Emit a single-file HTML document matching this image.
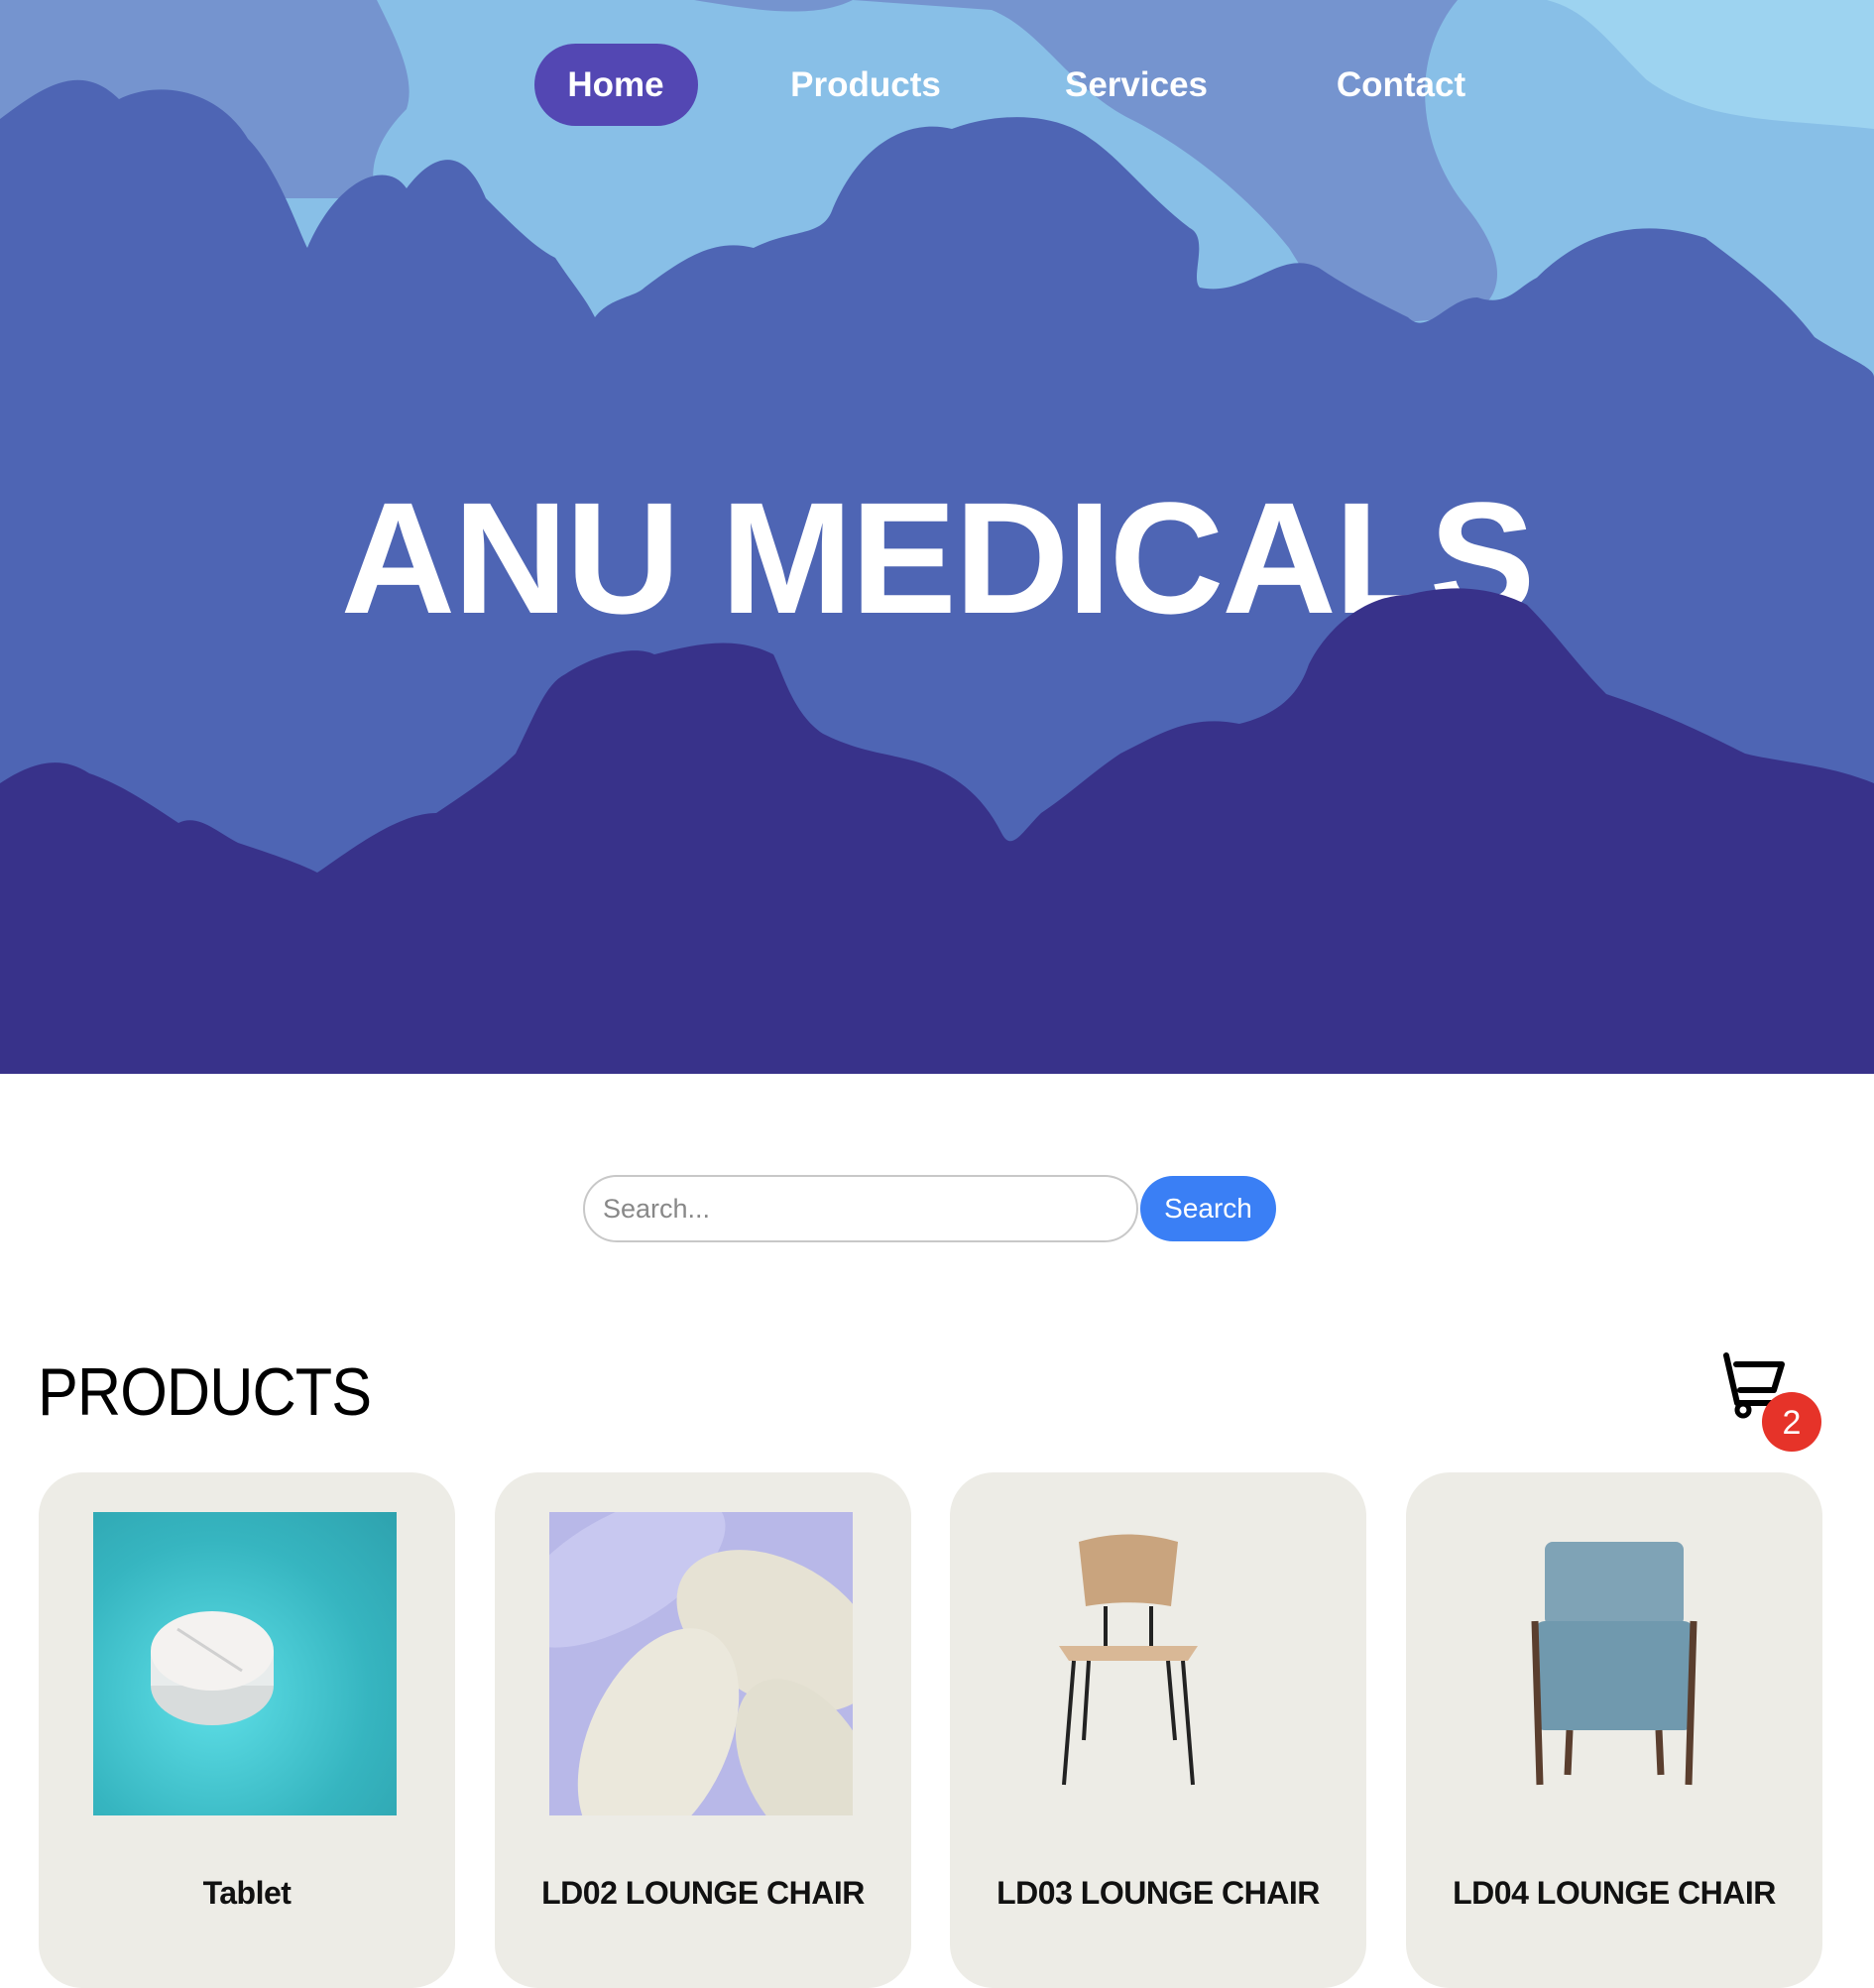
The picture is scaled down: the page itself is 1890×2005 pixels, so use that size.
<!DOCTYPE html>
<html><head><meta charset="utf-8"><style>
*{margin:0;padding:0;box-sizing:border-box}
body{width:1890px;height:1974px;overflow:hidden;background:#fff;font-family:"Liberation Sans",sans-serif;position:relative}
.hero{position:absolute;left:0;top:0;width:1890px;height:1083px;overflow:hidden;background:#88bfe7}
.nav a{position:absolute;top:44px;height:83px;line-height:83px;color:#fff;font-weight:700;font-size:35px;text-decoration:none;transform:translateX(-50%);white-space:nowrap}
.title{position:absolute;left:0;width:1890px;text-align:center;top:468px;font-size:160px;font-weight:700;color:#fff;letter-spacing:-2px;line-height:190px}
.abs{position:absolute}
.card{position:absolute;top:1485px;width:420px;height:520px;background:#edece6;border-radius:44px}
.card .img{position:absolute;left:55px;top:40px;width:306px;height:306px;overflow:hidden}
.cap{position:absolute;top:1891px;text-align:center;font-weight:700;font-size:32px;color:#111;letter-spacing:-0.5px}
</style></head><body>
<div class="hero">
<svg class="abs" style="left:0;top:0" width="1890" height="1083" viewBox="0 0 1890 1083">
<path d="M860 0 L1890 0 L1890 130 C1800 120 1720 125 1660 80 C1620 40 1600 10 1560 0 Z" fill="#9dd3f0"/>
<path d="M0 0 L1890 0 L1890 0 L1470 0 C1420 60 1430 150 1480 210 C1520 260 1520 300 1480 320 L1350 330 L1300 250 C1260 200 1200 150 1140 120 C1080 90 1050 30 1000 10 L860 0 C820 20 760 10 700 0 L380 0 C400 40 420 80 410 110 C380 140 370 170 380 200 L0 200 Z" fill="#7594cf"/>
<path d="M0 120 C40 90 80 60 120 100 C160 80 220 90 250 140 C280 170 300 230 310 250 C340 180 390 160 410 190 C440 150 470 150 490 200 C520 230 540 250 560 260 C580 290 590 300 600 320 C615 300 640 300 650 290 C690 260 720 240 760 250 C800 230 830 240 840 210 C870 140 920 120 960 130 C1000 115 1060 110 1100 140 C1130 160 1160 200 1200 230 C1220 240 1200 280 1210 290 C1260 300 1290 250 1330 270 C1360 290 1380 300 1420 320 C1440 340 1460 300 1490 300 C1520 310 1530 290 1550 280 C1600 230 1660 220 1720 240 C1760 270 1800 300 1830 340 C1860 360 1890 370 1890 380 L1890 1083 L0 1083 Z" fill="#4e65b4"/>
</svg>
<div class="title">ANU MEDICALS</div>
<svg class="abs" style="left:0;top:0" width="1890" height="1083" viewBox="0 0 1890 1083">
<path d="M0 790 C30 770 60 760 90 780 C120 790 150 810 180 830 C200 820 220 840 240 850 C270 860 300 870 320 880 C350 860 400 820 440 820 C470 800 500 780 520 760 C540 720 550 690 570 680 C600 660 640 650 660 660 C700 650 740 640 780 660 C790 680 800 720 830 740 C870 760 900 760 930 770 C960 780 990 800 1010 840 C1020 860 1030 840 1050 820 C1080 800 1100 780 1130 760 C1170 740 1200 720 1250 730 C1290 720 1310 700 1320 670 C1340 630 1380 600 1420 600 C1460 590 1500 590 1540 610 C1570 640 1590 670 1620 700 C1680 720 1720 740 1760 760 C1800 770 1840 770 1890 790 L1890 1083 L0 1083 Z" fill="#38328a"/>
</svg>
<div class="abs" style="left:539px;top:44px;width:165px;height:83px;border-radius:42px;background:#5347b3"></div>
<div class="nav">
<a style="left:621px">Home</a>
<a style="left:873px">Products</a>
<a style="left:1146px">Services</a>
<a style="left:1413px">Contact</a>
</div>
</div>

<div class="abs" style="left:588px;top:1185px;width:560px;height:68px;border:2px solid #c8c8c8;border-radius:34px;font-size:27px;color:#888;line-height:64px;padding-left:18px">Search...</div>
<div class="abs" style="left:1150px;top:1186px;width:137px;height:66px;background:#3a7ff5;border-radius:33px;color:#fff;font-size:28px;line-height:66px;text-align:center">Search</div>

<div class="abs" style="left:38px;top:1366px;font-size:68px;color:#000;line-height:76px;letter-spacing:-1px;transform:scaleX(0.9);transform-origin:left">PRODUCTS</div>
<svg class="abs" style="left:1730px;top:1360px" width="120" height="110" viewBox="0 0 120 110">
<path d="M11 7 L22 55 L59 55 M21 16 L67 16 L59 42 L25 42" fill="none" stroke="#000" stroke-width="6" stroke-linecap="round" stroke-linejoin="round"/>
<circle cx="28" cy="62" r="6" fill="none" stroke="#000" stroke-width="5"/>
<circle cx="77" cy="74" r="30" fill="#e63329"/>
<text x="77" y="86" text-anchor="middle" font-size="34" fill="#fff" font-family="Liberation Sans">2</text>
</svg>

<div class="card" style="left:39px"><div class="img" style="background:radial-gradient(ellipse at 40% 60%,#5fe0e8,#36b5c0 60%,#2ea2ae)">
<svg width="306" height="306"><ellipse cx="120" cy="175" rx="62" ry="40" fill="#d8dcdc"/><rect x="58" y="140" width="124" height="35" fill="#e8ecec"/><ellipse cx="120" cy="140" rx="62" ry="40" fill="#f4f2f0"/><line x1="85" y1="118" x2="150" y2="160" stroke="#d0d0d0" stroke-width="3"/></svg>
</div></div>
<div class="card" style="left:499px"><div class="img" style="background:#e8e6e0">
<svg width="306" height="306"><rect width="306" height="306" fill="#b8b8e8"/><ellipse cx="70" cy="60" rx="120" ry="55" transform="rotate(-30 70 60)" fill="#c8c8f0"/><ellipse cx="230" cy="120" rx="110" ry="70" transform="rotate(30 230 120)" fill="#e6e2d4"/><ellipse cx="110" cy="230" rx="70" ry="120" transform="rotate(25 110 230)" fill="#ebe8dc"/><ellipse cx="260" cy="260" rx="60" ry="100" transform="rotate(-30 260 260)" fill="#e2dfd0"/></svg>
</div></div>
<div class="card" style="left:958px"><div class="img">
<svg width="306" height="306"><path d="M75 30 C110 20 140 20 175 30 L168 95 C140 90 110 90 82 95 Z" fill="#c9a47e"/><line x1="102" y1="95" x2="102" y2="135" stroke="#222" stroke-width="4"/><line x1="148" y1="95" x2="148" y2="135" stroke="#222" stroke-width="4"/><path d="M55 135 L195 135 L185 150 L65 150 Z" fill="#d9b896"/><path d="M70 150 L60 275 M180 150 L190 275 M85 150 L80 230 M165 150 L172 230" stroke="#222" stroke-width="4"/></svg>
</div></div>
<div class="card" style="left:1418px"><div class="img">
<svg width="306" height="306"><rect x="85" y="30" width="140" height="85" rx="8" fill="#7fa3b6"/><rect x="75" y="110" width="160" height="110" rx="10" fill="#7099ae"/><path d="M75 110 L80 275 M235 110 L230 275 M110 220 L108 265 M200 220 L202 265" stroke="#5a3e2e" stroke-width="7"/></svg>
</div></div>
<div class="cap" style="left:39px;width:420px">Tablet</div>
<div class="cap" style="left:499px;width:420px">LD02 LOUNGE CHAIR</div>
<div class="cap" style="left:958px;width:420px">LD03 LOUNGE CHAIR</div>
<div class="cap" style="left:1418px;width:420px">LD04 LOUNGE CHAIR</div>
</body></html>
